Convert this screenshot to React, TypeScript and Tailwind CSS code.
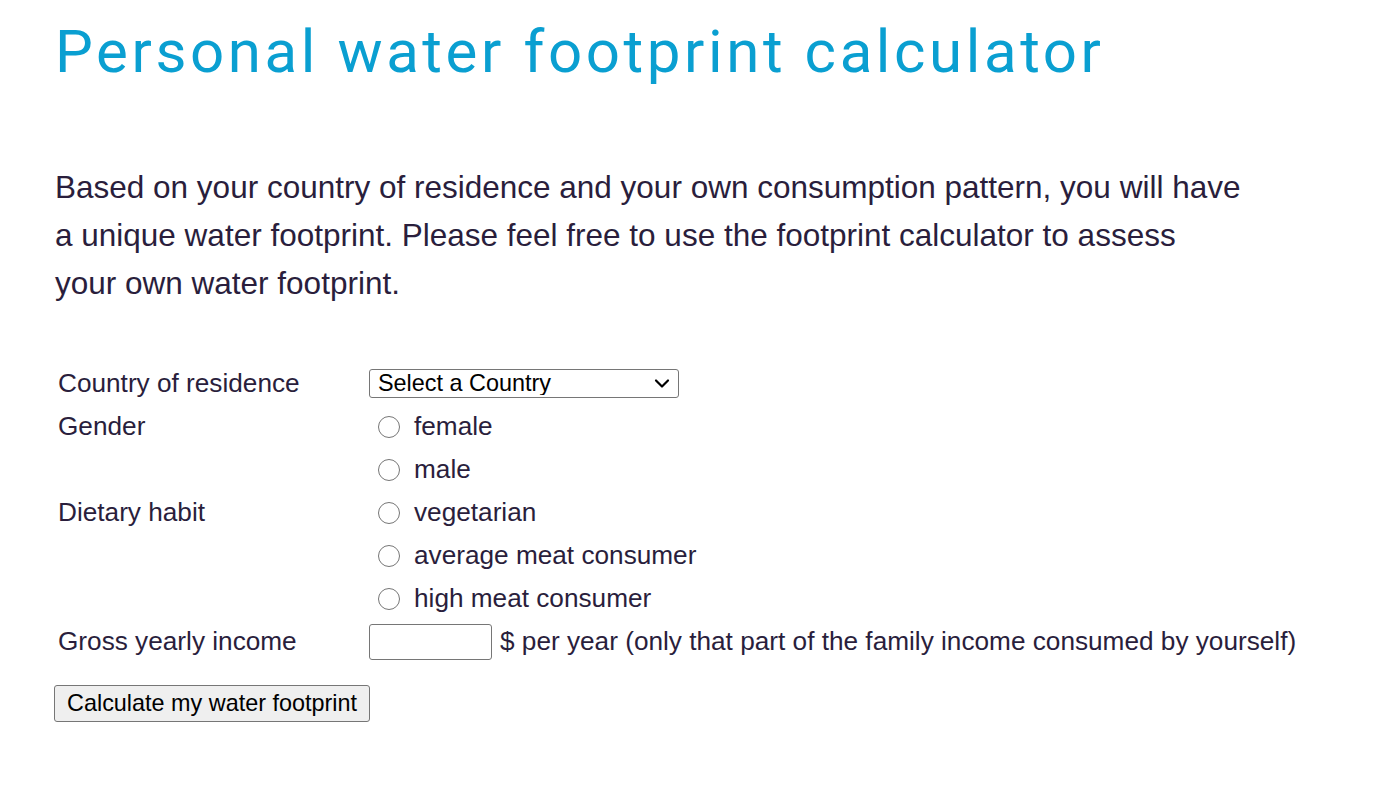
import React from 'react';

const ink = 'text-[#2a1e3c]';

const Radio = ({ name, label }: { name: string; label: string }) => (
  <label className="flex items-center h-[43px] cursor-pointer">
    <input
      type="radio"
      name={name}
      className="appearance-none w-[22px] h-[22px] ml-[9px] mr-[14px] rounded-full border-[1.5px] border-[#767676] bg-white checked:border-[6px] checked:border-[#0075ff]"
    />
    <span>{label}</span>
  </label>
);

const App = () => {
  return (
    <div className="min-h-screen bg-white pl-[55px] pt-[12px] font-['Liberation_Sans',Arial,sans-serif]">
      <h1 className="font-['Roboto',sans-serif] font-normal text-[60px] leading-[80px] text-[#0a9fd1] tracking-[3.6px]">
        Personal water footprint calculator
      </h1>

      <p className={`mt-[71px] text-[31.5px] leading-[48px] whitespace-nowrap ${ink}`}>
        Based on your country of residence and your own consumption pattern, you will have
        <br />
        a unique water footprint. Please feel free to use the footprint calculator to assess
        <br />
        your own water footprint.
      </p>

      <form className={`mt-[55px] text-[26.2px] ${ink}`} onSubmit={(e) => e.preventDefault()}>
        <div className="grid grid-cols-[311px_auto] pl-[3px] items-start">
          <div className="h-[43px] flex items-center">Country of residence</div>
          <div className="h-[43px] flex items-center">
            <div className="relative w-[310px] h-[29px]">
              <select className="block appearance-none w-full h-full border border-[#767676] rounded-[3px] bg-white pl-[8px] text-[23.4px] text-black leading-none">
                <option>Select a Country</option>
              </select>
              <svg
                className="pointer-events-none absolute right-[9px] top-[9px]"
                width="16"
                height="11"
                viewBox="0 0 16 11"
                fill="none"
              >
                <path d="M2 2.5 L8 8.5 L14 2.5" stroke="#000" strokeWidth="2.2" strokeLinecap="round" strokeLinejoin="round" />
              </svg>
            </div>
          </div>

          <div className="h-[43px] flex items-center">Gender</div>
          <div>
            <Radio name="gender" label="female" />
            <Radio name="gender" label="male" />
          </div>

          <div className="h-[43px] flex items-center">Dietary habit</div>
          <div>
            <Radio name="diet" label="vegetarian" />
            <Radio name="diet" label="average meat consumer" />
            <Radio name="diet" label="high meat consumer" />
          </div>

          <div className="h-[43px] flex items-center">Gross yearly income</div>
          <div className="h-[43px] flex items-center">
            <input
              type="text"
              className="block w-[123px] h-[36px] border border-[#767676] rounded-[3px] bg-white mr-[8px]"
            />
            <span className="whitespace-nowrap">$ per year (only that part of the family income consumed by yourself)</span>
          </div>
        </div>

        <button
          type="submit"
          className="block mt-[22px] -ml-px w-[316px] h-[37px] bg-[#efefef] border border-[#767676] rounded-[3px] text-[23.4px] text-black hover:bg-[#e5e5e5]"
        >
          Calculate my water footprint
        </button>
      </form>
    </div>
  );
};

export default App;
